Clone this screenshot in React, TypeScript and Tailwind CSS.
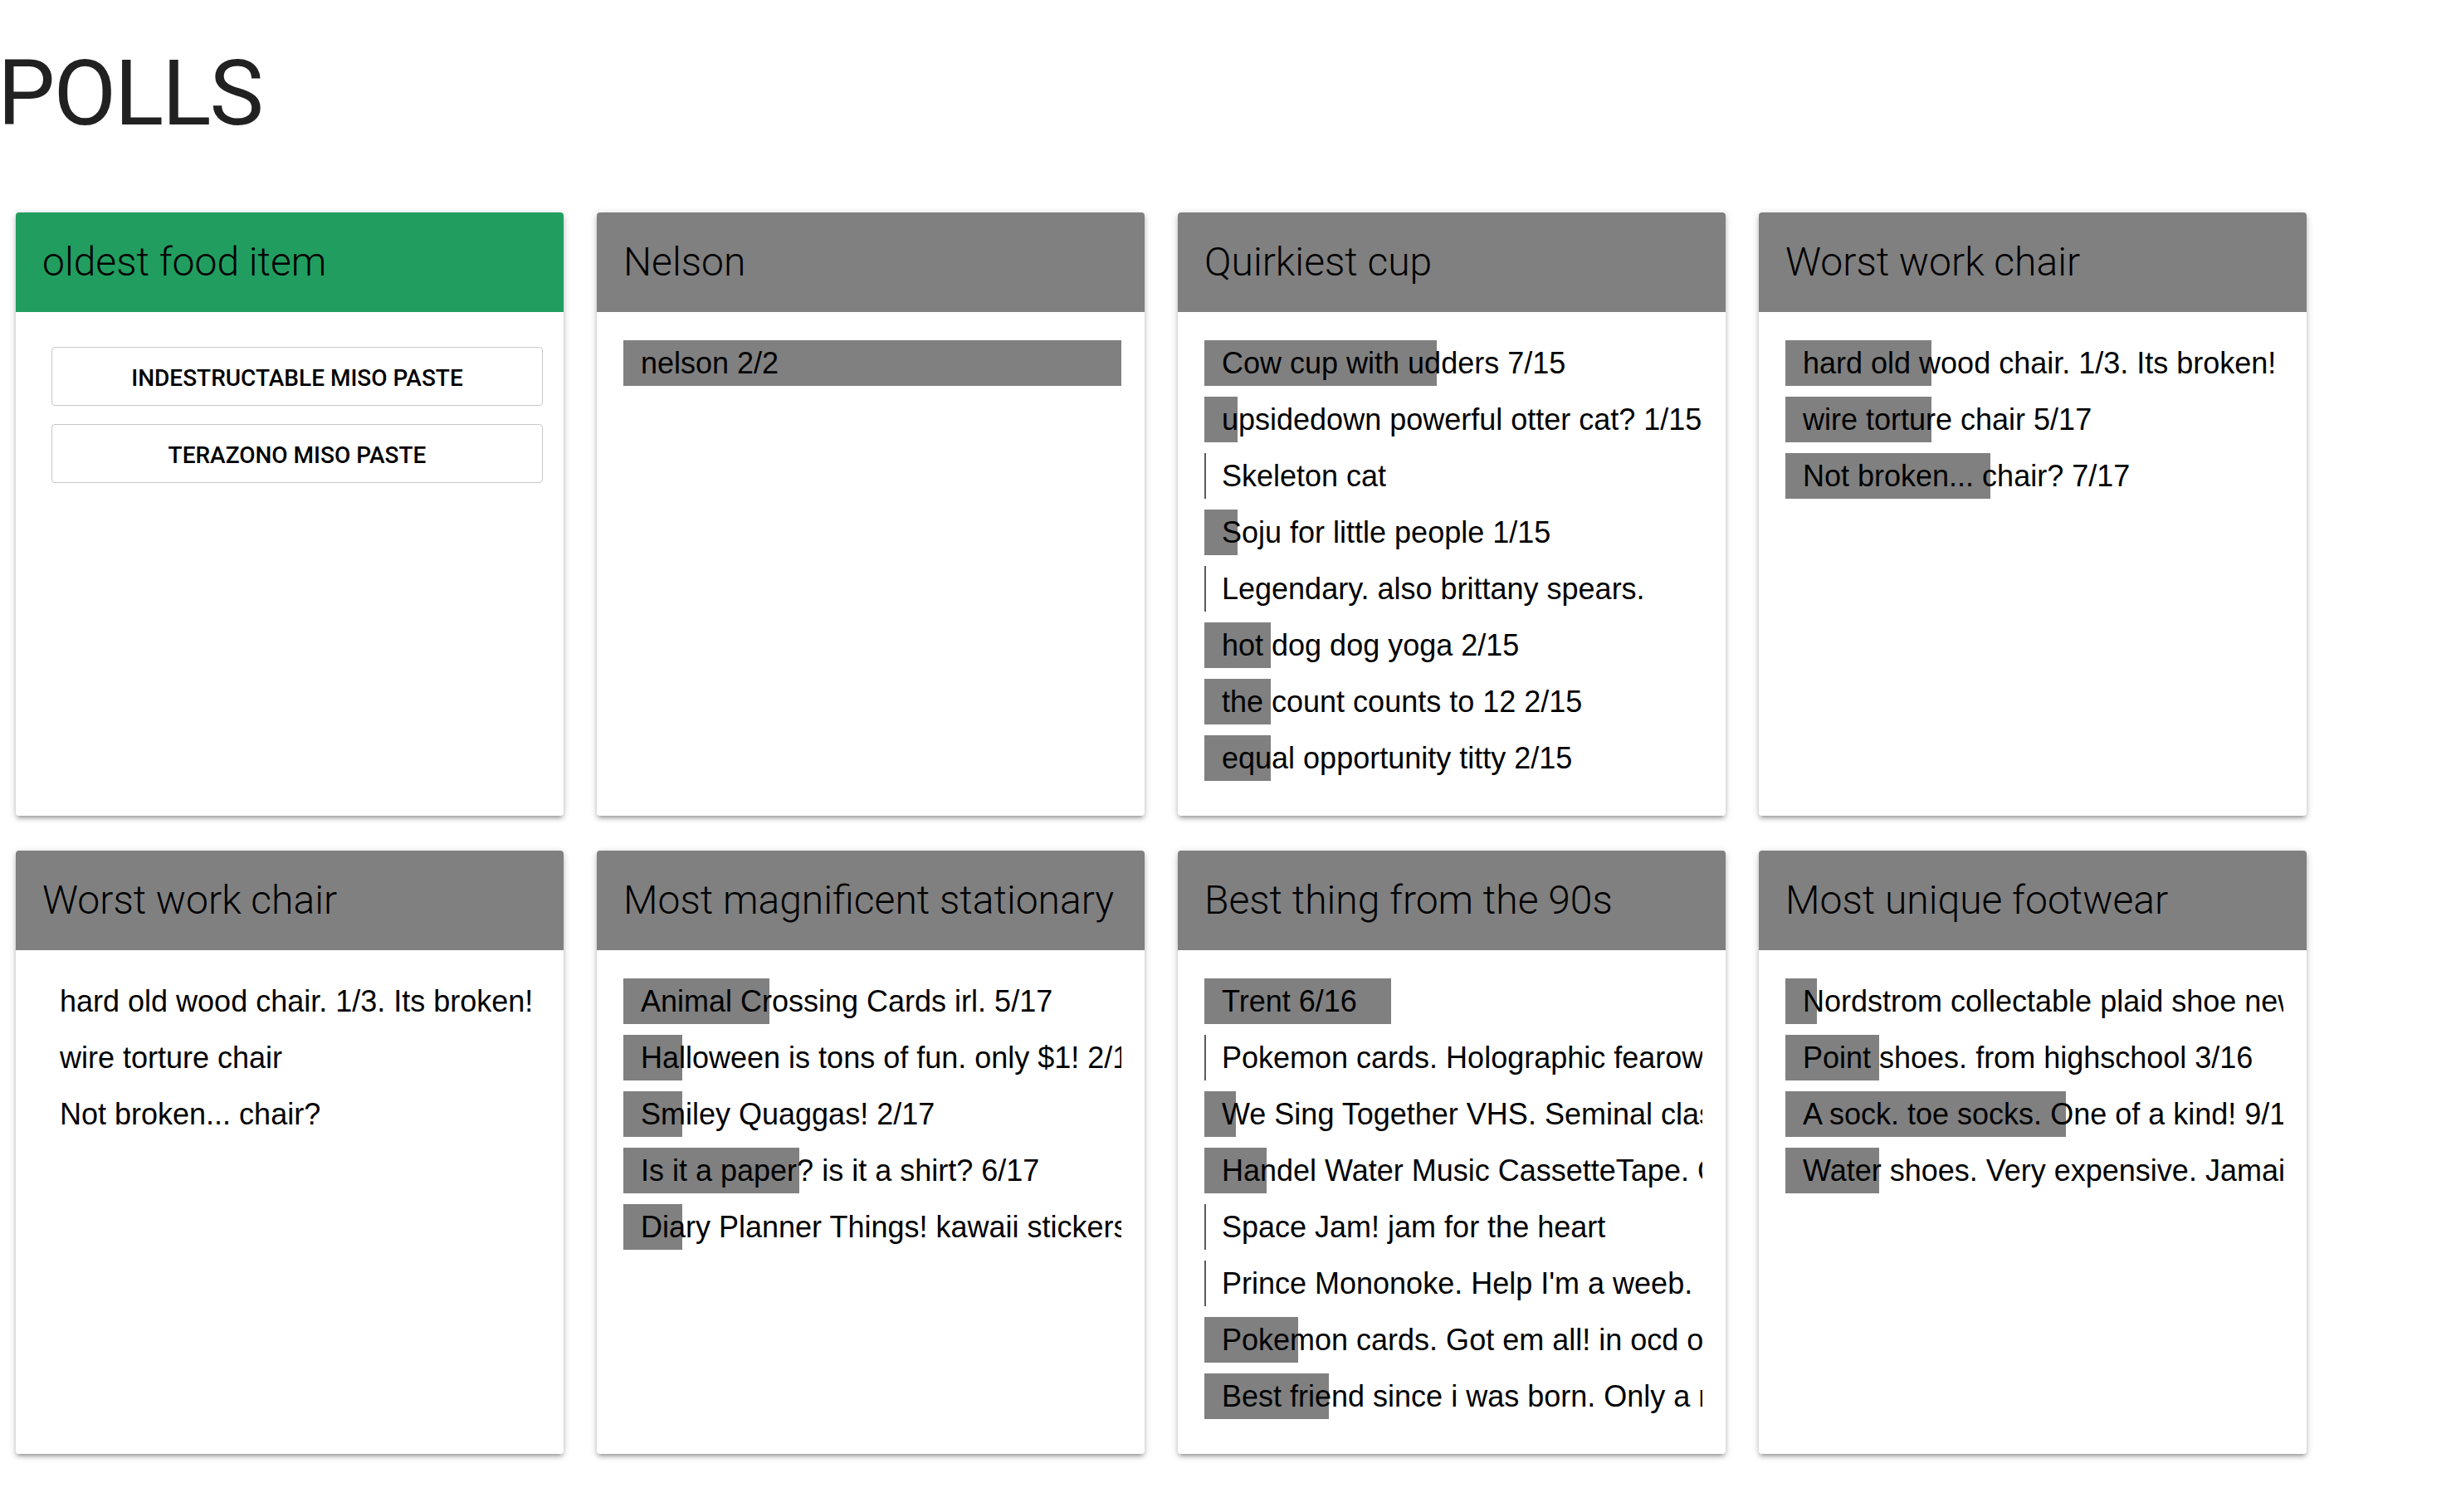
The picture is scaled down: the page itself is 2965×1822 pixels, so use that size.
import React from "react";

type Item = { text: string; frac: number | null };
type Poll = { title: string; green?: boolean; buttons?: string[]; items?: Item[] };

const polls: Poll[] = [
  {
    title: "oldest food item",
    green: true,
    buttons: ["INDESTRUCTABLE MISO PASTE", "TERAZONO MISO PASTE"],
  },
  { title: "Nelson", items: [{ text: "nelson 2/2", frac: 1 }] },
  {
    title: "Quirkiest cup",
    items: [
      { text: "Cow cup with udders 7/15", frac: 7 / 15 },
      { text: "upsidedown powerful otter cat? 1/15", frac: 1 / 15 },
      { text: "Skeleton cat", frac: 0 },
      { text: "Soju for little people 1/15", frac: 1 / 15 },
      { text: "Legendary. also brittany spears.", frac: 0 },
      { text: "hot dog dog yoga 2/15", frac: 2 / 15 },
      { text: "the count counts to 12 2/15", frac: 2 / 15 },
      { text: "equal opportunity titty 2/15", frac: 2 / 15 },
    ],
  },
  {
    title: "Worst work chair",
    items: [
      { text: "hard old wood chair. 1/3. Its broken! 5/17", frac: 5 / 17 },
      { text: "wire torture chair 5/17", frac: 5 / 17 },
      { text: "Not broken... chair? 7/17", frac: 7 / 17 },
    ],
  },
  {
    title: "Worst work chair",
    items: [
      { text: "hard old wood chair. 1/3. Its broken!", frac: null },
      { text: "wire torture chair", frac: null },
      { text: "Not broken... chair?", frac: null },
    ],
  },
  {
    title: "Most magnificent stationary",
    items: [
      { text: "Animal Crossing Cards irl. 5/17", frac: 5 / 17 },
      { text: "Halloween is tons of fun. only $1! 2/17", frac: 2 / 17 },
      { text: "Smiley Quaggas! 2/17", frac: 2 / 17 },
      { text: "Is it a paper? is it a shirt? 6/17", frac: 6 / 17 },
      { text: "Diary Planner Things! kawaii stickers 2/17", frac: 2 / 17 },
    ],
  },
  {
    title: "Best thing from the 90s",
    items: [
      { text: "Trent 6/16", frac: 6 / 16 },
      { text: "Pokemon cards. Holographic fearow forever", frac: 0 },
      { text: "We Sing Together VHS. Seminal classic 1/16", frac: 1 / 16 },
      { text: "Handel Water Music CassetteTape. Classic 2/16", frac: 2 / 16 },
      { text: "Space Jam! jam for the heart", frac: 0 },
      { text: "Prince Mononoke. Help I'm a weeb. lol", frac: 0 },
      { text: "Pokemon cards. Got em all! in ocd order 3/16", frac: 3 / 16 },
      { text: "Best friend since i was born. Only a real one 4/16", frac: 4 / 16 },
    ],
  },
  {
    title: "Most unique footwear",
    items: [
      { text: "Nordstrom collectable plaid shoe new 1/16", frac: 1 / 16 },
      { text: "Point shoes. from highschool 3/16", frac: 3 / 16 },
      { text: "A sock. toe socks. One of a kind! 9/16", frac: 9 / 16 },
      { text: "Water shoes. Very expensive. Jamaica 3/16", frac: 3 / 16 },
    ],
  },
];

function Row({ item }: { item: Item }) {
  const w = item.frac === null ? null : Math.round(item.frac * 600);
  return (
    <div className="relative h-[55px] w-[600px] overflow-hidden">
      {w !== null &&
        (item.frac === 0 ? (
          <div className="absolute left-0 top-0 h-[55px] w-[2px] bg-[#5a5a5a]" />
        ) : (
          <div
            className="absolute left-0 top-0 h-[55px] bg-[#808080] shadow-[0_1px_0_#c9c9c9]"
            style={{ width: w }}
          />
        ))}
      <div className="relative whitespace-nowrap pl-[21px] text-[36px] leading-[55px] text-black [font-family:'Liberation_Sans',Arial,sans-serif]">
        {item.text}
      </div>
    </div>
  );
}

function Card({ poll }: { poll: Poll }) {
  return (
    <div className="flex h-[727px] w-[660px] flex-col overflow-hidden rounded-[4px] bg-white shadow-[0_4px_4px_0_rgba(0,0,0,0.14),0_6px_2px_-4px_rgba(0,0,0,0.12),0_2px_10px_0_rgba(0,0,0,0.2)]">
      <div
        className={`flex h-[120px] shrink-0 items-center pl-[32px] ${
          poll.green ? "bg-[#219e5f]" : "bg-[#808080]"
        }`}
      >
        <span className="whitespace-nowrap text-[48px] font-light leading-[48px] text-black [font-family:Roboto,'Liberation_Sans',sans-serif]">
          {poll.title}
        </span>
      </div>
      {poll.buttons ? (
        <div className="flex flex-col gap-[22px] pl-[43px] pr-[25px] pt-[42px]">
          {poll.buttons.map((b) => (
            <div
              key={b}
              className="flex h-[71px] items-center justify-center rounded-[4px] border border-[#c8c8c8] bg-white pt-[4px] text-[28px] font-medium text-black [font-family:Roboto,'Liberation_Sans',sans-serif]"
            >
              {b}
            </div>
          ))}
        </div>
      ) : (
        <div className="flex flex-col gap-[13px] pl-[32px] pt-[34px]">
          {poll.items?.map((it, i) => (
            <Row key={i} item={it} />
          ))}
        </div>
      )}
    </div>
  );
}

export default function App() {
  return (
    <div className="min-h-[1822px] w-full bg-white pb-[60px]">
      <h1 className="ml-[-3px] pt-[58px] text-[110px] font-normal leading-[110px] tracking-[-2px] text-[#212121] [font-family:Roboto,'Liberation_Sans',sans-serif]">
        POLLS
      </h1>
      <div className="mt-[88px] grid grid-cols-[repeat(4,660px)] gap-x-[40px] gap-y-[42px] pl-[19px]">
        {polls.map((p, i) => (
          <Card key={i} poll={p} />
        ))}
      </div>
    </div>
  );
}
